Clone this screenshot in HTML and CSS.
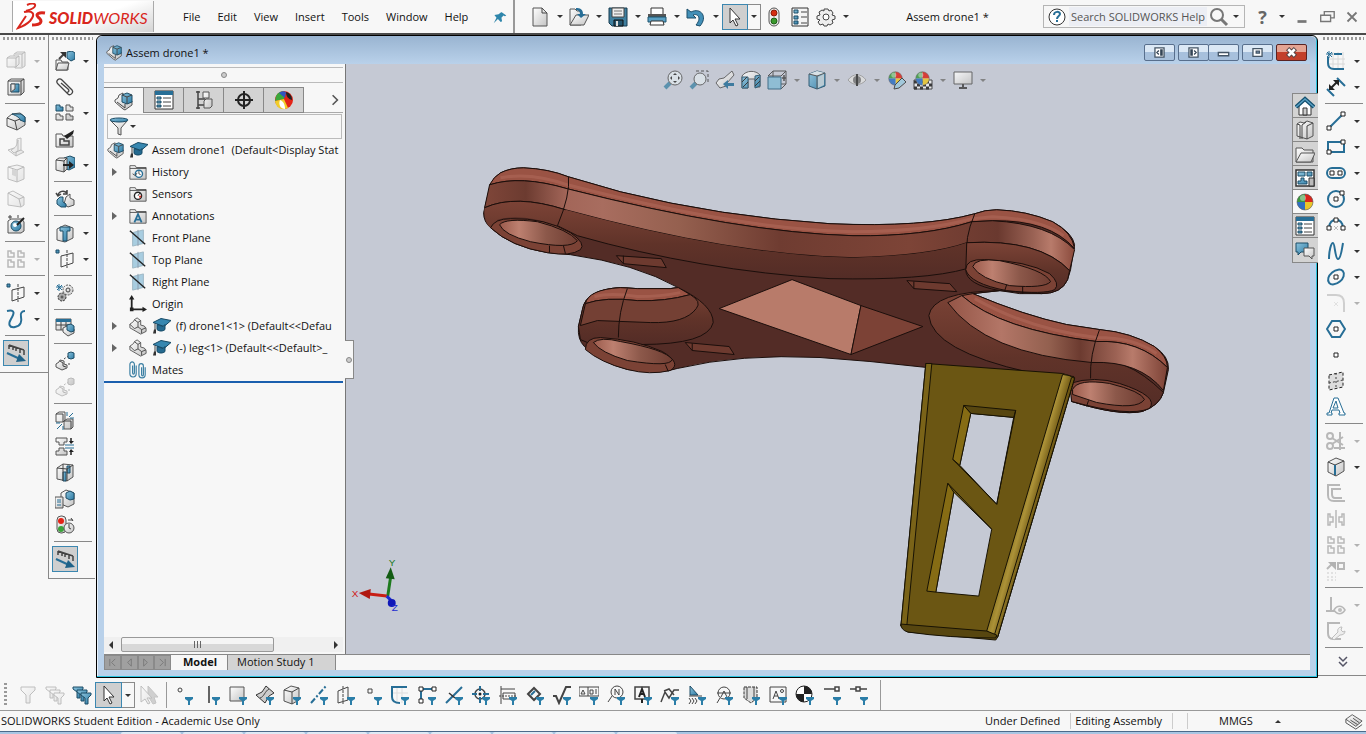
FILE: index.html
```html
<!DOCTYPE html>
<html lang="en">
<head>
  <meta charset="UTF-8" /><meta name="viewport" content="width=device-width,initial-scale=1" />
  <title>SOLIDWORKS - Assem drone1 *</title>
  <link rel="stylesheet" href="styles.css">
</head>
<body>

  <!-- Icon sprite, 20x20 unless noted -->
  <svg class="sprite" aria-hidden="true">
    <defs>
      <linearGradient id="gBlue" x1="0" y1="0" x2="1" y2="1"><stop offset="0" stop-color="#8cc3dc"/><stop offset="1" stop-color="#2c7ba5"/></linearGradient>
      <linearGradient id="gGrey" x1="0" y1="0" x2="1" y2="1"><stop offset="0" stop-color="#fff"/><stop offset="1" stop-color="#c4c4c4"/></linearGradient>
    </defs>

    <symbol id="assembly" viewBox="0 0 20 20"><path class="g" d="M1 9l3-2 1-3 4-2v7l5 3 4-2v4l-7 5-2-1-8-7z"/><path class="b" d="M8 4l5-2 5 2v7l-5 2-5-2z"/><path class="k" d="M8 4l5 2 5-2M13 6v7M3 11l8 6v-4"/></symbol>
    <symbol id="part" viewBox="0 0 20 20"><path class="g" d="M1 8l4-3 1-2 3-2 4 3v5l4 1 2 3v3l-6 3-12-7z"/><path class="k" d="M6 3l4 3v5l-4 2-5-5M10 6l3-2M10 11l4 3 5-2M14 14v4"/></symbol>
    <symbol id="cap" viewBox="0 2 20 17"><path fill="#3787b0" stroke="#174a66" d="M1 7l8-4 10 2-7 6z"/><path fill="#256a90" stroke="#174a66" d="M5 9v5c2 2 6 2 8 0V9l-2 2z"/><path class="k" d="M3 8v7"/><path fill="#333" d="M2 14h2v4H1z"/></symbol>
    <symbol id="extrude" viewBox="0 0 20 20"><path class="g" d="M8 3l3-2h8v14l-3 2H9z"/><path class="g" d="M1 7l3-2h9v8l-3 3H1z"/><path class="k" d="M1 7h9v9M10 7l3-2M9 3h7v13M16 3l3-2"/></symbol>
    <symbol id="cut" viewBox="0 0 20 20"><path class="g" d="M2 4l3-2h13v13l-3 3H2z"/><path class="k" d="M2 4h13v14M15 4l3-2"/><path class="b" d="M5 7h8v8H5z"/><path class="g" d="M5 7h4v5l-4 3z"/></symbol>
    <symbol id="fillet" viewBox="0 0 20 20"><path class="g" d="M1 7l5-4 8-1 5 4v8l-8 5-10-4z"/><path class="b" d="M6 3h9l4 3v5l-5-2c0-2-3-4-8-6z"/><path class="k" d="M1 7l8 3 2 9M9 10l5-2"/></symbol>
    <symbol id="rib" viewBox="0 0 20 20"><path class="g" d="M2 13l9-3V2l4-1v12l3 2-8 4z"/><path class="g" d="M5 13c5-2 6-5 7-10v11l-4 2z"/><path class="k" d="M10 19v-4l5-2"/></symbol>
    <symbol id="shell" viewBox="0 0 20 20"><path class="g" d="M2 4l9-2 7 2v12l-7 3-9-3z"/><path class="k" d="M2 4l9 3 7-3M11 7v12"/><path fill="#999" d="M6 6l5 1v7l-5-2z"/></symbol>
    <symbol id="draft" viewBox="0 0 20 20"><path class="g" d="M2 4l5-2 11 6v8l-3 2-13-2z"/><path class="k" d="M2 4l11 6 5-2M13 10l2 8"/></symbol>
    <symbol id="camera" viewBox="0 0 20 20"><path class="g" d="M2 6l3-2h11l2 3v9l-3 2H2z"/><circle class="b" cx="10" cy="11" r="5"/><circle fill="#fff" cx="9" cy="10" r="2"/><path stroke="#222" stroke-width="2" d="M18 3l-7 7"/><path class="k" d="M4 0v4M2 2h4M12 0v3"/></symbol>
    <symbol id="pattern" viewBox="0 0 20 20"><path class="b" d="M1 2h4v2h3v4H1z"/><path class="g" d="M11 2h4v2h3v4h-7zM1 11h4v2h3v4H1zM11 11h4v2h3v4h-7z"/></symbol>
    <symbol id="refgeo" viewBox="0 0 20 20"><path fill="#4b93b8" stroke="#1f4f6b" d="M1 1h3v3H1z"/><path class="k" d="M6 7l12-3v10L6 18z"/><path class="k" stroke-dasharray="3 1" d="M12 1v18"/></symbol>
    <symbol id="curve" viewBox="0 0 20 20"><path fill="none" stroke="#276e96" stroke-width="2" d="M1 2c9-2 7 3 4 8s-2 9 4 8 7-6 6-10 1-6 4-6"/></symbol>
    <symbol id="instant" viewBox="0 0 20 20"><path class="k" stroke-width="1.5" d="M3 2l15 5M3 2v4M7 3v4M10 4v4M14 6v4M18 7v5"/><path stroke="#276e96" stroke-width="2" d="M1 10l13 6"/><path fill="#1f6288" d="M13 11l7 7-10 1z"/></symbol>

    <symbol id="insertcomp" viewBox="0 0 20 20"><path class="g" d="M1 9h5l1 2h6v8H1z"/><path class="g" d="M3 12h11l-2 7H1z"/><path class="b" d="M12 1l5-1 3 2v6l-4 2-4-3z"/><path class="k" stroke-width="2" d="M4 8l5-5"/><path fill="#333" d="M5 1h6v6z"/></symbol>
    <symbol id="clip" viewBox="0 0 20 20"><path class="k" stroke-width="1.3" d="M3 7l10 10c2 2 6-1 4-4L7 3C4 0 0 4 3 7l8 8c2 1 4-1 2-3L6 6"/></symbol>
    <symbol id="preview" viewBox="0 0 20 20"><path class="g" d="M1 5h6l1 2h10v11H1z"/><path class="k" stroke-width="1.5" d="M5 10h4v2h5v4H5z"/><path fill="#222" d="M9 7l10-6-1 4-6 5z"/></symbol>
    <symbol id="movecomp" viewBox="0 0 20 20"><path class="b" d="M9 3l6-2 5 2v9l-6 3-5-2z"/><path class="g" d="M1 5l3-2h8v11l-3 3-8-2z"/><path class="k" d="M1 5l8 1v11M9 6l3-3"/><path stroke="#222" stroke-width="2" d="M8 10h8"/><path fill="#222" d="M14 6l5 4-5 4z"/></symbol>
    <symbol id="rotate" viewBox="0 0 20 20"><path class="g" d="M11 8l4-3v4l4 2v5l-6 2-4-3z"/><path class="b" d="M2 11l3-3h3v5l3 2v3H6l-4-3z"/><path class="k" stroke-width="1.5" d="M3 6c1-4 6-5 9-2M12 1v4H8M1 4l2 3 3-2"/></symbol>
    <symbol id="hardware" viewBox="0 0 20 20"><path class="g" d="M2 6l8-4 8 3v10l-8 4-8-2z"/><path class="b" d="M5 4h10v4h-3v10H8V8H5z"/></symbol>
    <symbol id="motion" viewBox="0 0 20 20"><circle class="g" cx="13" cy="7" r="5" stroke-dasharray="2 1"/><circle class="k" cx="13" cy="7" r="2"/><circle cx="7" cy="14" r="4" fill="#aaa" stroke="#333" stroke-dasharray="2 1"/><circle class="k" cx="7" cy="14" r="1"/><path stroke="#276e96" d="M4 1v7M1 4h7M2 2l5 5M7 2L2 7"/></symbol>
    <symbol id="bom" viewBox="0 0 20 20"><path class="g" d="M1 2h15v11H1z"/><path fill="#276e96" d="M1 2h15v3H1z"/><path class="k" d="M1 8h15M6 5v8M11 5v8"/><path class="g" d="M8 11l4-2 7 3v4l-6 3-5-4z"/><path class="b" d="M12 8l4-1 3 2v5l-3 1-4-2z"/></symbol>
    <symbol id="explode" viewBox="0 0 20 20"><path class="g" d="M1 13l3-2 1-2 4 1v3l3 1v3l-5 2-6-3z"/><path class="k" d="M5 10l3 2v3l3 1"/><path class="b" d="M13 2l3-1 3 1v5l-3 1-3-1z"/><path class="k" stroke-dasharray="2 2" d="M9 8l4-3M14 14v-4"/></symbol>
    <symbol id="interfere" viewBox="0 0 20 20"><path class="g" d="M1 3l3-2h6v8l-2 2H1zM9 10l3-2h6v8l-2 2H9z"/><path class="k" d="M1 3h7v8M9 10h7v8"/><path stroke="#276e96" d="M12 5V1M14 6l4-4M15 7h4M7 13l-5 5M5 12H1M8 15v4"/></symbol>
    <symbol id="clearance" viewBox="0 0 20 20"><path class="g" d="M1 1h11v4H9v3H4V5H1zM1 18h11v-4H9v-3H4v3H1z"/><path stroke="#276e96" d="M10 8h9M10 11h9"/><path stroke="#222" stroke-width="1.5" d="M16 1v5M16 18v-5"/><path fill="#222" d="M14 4h5l-3 3zM14 15h5l-3-3z"/></symbol>
    <symbol id="align" viewBox="0 0 20 20"><path class="g" d="M2 5l6-4 10 1v12l-6 4-10-2z"/><path class="b" d="M12 3h3v7h-3zM8 9h3v9H8z"/><path class="k" d="M2 5l10 1v12M12 6l6-4M8 1v17"/></symbol>
    <symbol id="visual" viewBox="0 0 20 20"><path class="g" d="M6 4l5-3 8 3v11l-6 3-7-3z"/><path class="b" d="M11 4l4-2 4 2v6l-4 1-4-2z"/><path class="g" d="M0 8h8v11H0z"/><path stroke="#276e96" d="M2 11h4M2 13h4M2 16h4"/></symbol>
    <symbol id="perf" viewBox="0 0 20 20"><rect class="g" x="2" y="1" width="9" height="17" rx="4"/><circle cx="6" cy="6" r="3" fill="#e32417"/><circle cx="6" cy="14" r="3" fill="#3ba33b"/><circle class="g" cx="14" cy="13" r="5"/><path class="k" d="M14 9v4l2 1M13 5h5M16 3l2 3"/></symbol>

    <symbol id="sketch" viewBox="0 0 20 20"><path stroke="#d8d8d8" d="M7 1v18M12 1v18M17 1v18M1 8h18M1 13h18"/><path class="s" stroke-width="2" d="M2 6v6c0 4 2 6 6 6h10M8 3h8"/><path stroke="#276e96" d="M3 0v7M0 3h7M1 1l5 5M6 1L1 6"/></symbol>
    <symbol id="dim" viewBox="0 0 20 20"><path class="s" stroke-width="2" d="M1 12l7 7M11 1l8 8"/><path stroke="#222" stroke-width="2" d="M5 11l6-6"/><path fill="#222" d="M3 7v6h6zM7 3h6v6z"/></symbol>
    <symbol id="line" viewBox="0 0 20 20"><path class="s" stroke-width="2" d="M3 17L17 3"/><path class="d" d="M1 15h4v4H1zM15 1h4v4h-4z"/></symbol>
    <symbol id="rect" viewBox="0 0 20 20"><path class="s" stroke-width="2" d="M2 5h16v10H2z"/><path class="d" d="M1 13h4v4H1zM15 3h4v4h-4z"/></symbol>
    <symbol id="slot" viewBox="0 0 20 20"><rect class="s" stroke-width="2" x="1" y="5" width="18" height="10" rx="5"/><path class="d" d="M4 8h4v4H4zM12 8h4v4h-4z"/></symbol>
    <symbol id="circle" viewBox="0 0 20 20"><circle class="s" stroke-width="2" cx="10" cy="10" r="8"/><path class="d" d="M8 8h4v4H8zM14 2h4v4h-4z"/></symbol>
    <symbol id="arc" viewBox="0 0 20 20"><path class="s" stroke-width="2" d="M3 13c0-11 14-11 14 0"/><path class="d" d="M8 3h4v4H8zM1 11h4v4H1zM15 11h4v4h-4z"/><path stroke="#bbb" d="M8 11l4 4M12 11l-4 4"/></symbol>
    <symbol id="spline" viewBox="0 0 20 20"><path class="s" stroke-width="2" d="M3 18C3 10 5 2 7 2s2 16 5 16S16 7 17 2"/></symbol>
    <symbol id="ellipse" viewBox="0 0 20 20"><ellipse class="s" stroke-width="2" cx="10" cy="10" rx="9" ry="6" transform="rotate(-40 10 10)"/><path class="d" d="M8 8h4v4H8z"/></symbol>
    <symbol id="skfillet" viewBox="0 0 20 20"><path fill="none" stroke="#888" stroke-width="2" d="M1 2h9c6 0 8 3 8 8v9"/><path stroke="#bbb" d="M8 9l4 4M12 9l-4 4"/></symbol>
    <symbol id="polygon" viewBox="0 0 20 20"><path class="s" stroke-width="2" d="M1 10l5-8h8l5 8-5 8H6z"/><path class="d" d="M8 8h4v4H8z"/></symbol>
    <symbol id="point" viewBox="0 0 20 20"><path class="d" d="M8 8h4v4H8z"/></symbol>
    <symbol id="plane" viewBox="0 0 20 20"><path fill="#ddd" stroke="#222" stroke-dasharray="3 2" d="M3 4l14-3v15L3 19z"/><path class="k" stroke-dasharray="2 2" d="M10 2v16M3 12l14-3"/></symbol>
    <symbol id="text" viewBox="0 0 20 20"><path fill="#fff" stroke="#276e96" d="M1 18h5v-2H5l1-3h7l1 3h-1v2h6v-2h-1L12 1H8L3 16H1zM7 11l3-7 2 7z"/></symbol>
    <symbol id="trim" viewBox="0 0 20 20"><circle class="k" stroke-width="2" cx="4" cy="5" r="3"/><circle class="k" stroke-width="2" cx="4" cy="15" r="3"/><path class="k" stroke-width="2" d="M6 7l11 7M6 13l11-7M8 17h11M14 1v18"/></symbol>
    <symbol id="convert" viewBox="0 0 20 20"><path class="g" d="M2 5l8-4 8 3v10l-8 5-8-4z"/><path class="k" d="M2 5l7 3 9-4M9 8v11"/><path stroke="#276e96" stroke-width="2" d="M9 8v10"/></symbol>
    <symbol id="offset" viewBox="0 0 20 20"><path class="k" stroke-width="2" d="M14 2H2v10c0 5 2 6 6 6h11M15 6H6v5c0 3 1 4 3 4h7"/></symbol>
    <symbol id="mirror" viewBox="0 0 20 20"><path class="k" stroke-width="1.5" d="M10 1v18M2 5h2v3h3v5H4v3H2zM18 5h-2v3h-3v5h3v3h2z"/></symbol>
    <symbol id="lpattern" viewBox="0 0 20 20"><path class="k" stroke-width="1.5" d="M2 2h3v2h3v4H2zM12 2h3v2h3v4h-6zM2 11h3v2h3v5H2zM12 11h3v2h3v5h-6z"/></symbol>
    <symbol id="moveent" viewBox="0 0 20 20"><path class="k" stroke-width="2" d="M1 8l5-5M12 2h6v6h-6z"/><path fill="#333" d="M2 1h8v8z"/><path stroke="#bbb" stroke-width="2" stroke-dasharray="2 2" d="M1 12h9M1 16h9M1 19h9"/></symbol>
    <symbol id="relations" viewBox="0 0 20 20"><path class="k" stroke-width="2" d="M5 2v14M0 16h9"/><path class="k" stroke-width="1.5" d="M8 15c3-5 8-5 11 0-3 5-8 5-11 0z"/><circle cx="14" cy="15" r="2" fill="#555"/></symbol>
    <symbol id="repair" viewBox="0 0 20 20"><path class="k" stroke-width="2" d="M14 2H2v10c0 5 2 6 5 6h8"/><path class="g" d="M6 17l6-6c-1-3 1-5 4-5l-1 3 2 2 2-1c0 3-2 4-5 4l-6 5z"/></symbol>
    <symbol id="more" viewBox="0 0 20 20"><path fill="none" stroke="#556" stroke-width="1.5" d="M6 6l4 4 4-4M6 11l4 4 4-4"/></symbol>

    <symbol id="new" viewBox="0 0 20 20"><path class="g" d="M3 1h9l5 5v13H3z"/><path class="k" d="M12 1v5h5"/></symbol>
    <symbol id="open" viewBox="0 0 20 20"><path class="g" d="M1 2h5l2 2h4v14H1z"/><path class="g" d="M7 8h13l-5 10H1z"/><path fill="#276e96" d="M7 1c4 0 7 1 7 6h3l-5 4-4-4h3c0-3-2-4-4-4z"/></symbol>
    <symbol id="save" viewBox="0 0 20 20"><path fill="#3e7f9f" stroke="#183c50" d="M1 1h18v18H4l-3-3z"/><path fill="#eee" stroke="#444" d="M4 1h12v9H4z"/><path stroke="#777" d="M6 4h8M6 7h8"/><path fill="#24566f" stroke="#111" d="M6 13h9v6H6z"/><path fill="#ddd" d="M8 14h2v5H8z"/></symbol>
    <symbol id="print" viewBox="0 0 20 20"><path fill="#fff" stroke="#333" d="M4 7V1h12v6"/><path fill="#555" d="M1 7h18v4H1z"/><path fill="#5aa0c4" stroke="#1d546f" d="M1 10h18v5H1z"/><path fill="#fff" stroke="#333" d="M4 14h12l1 4H3z"/></symbol>
    <symbol id="undo" viewBox="0 0 20 20"><path fill="#4390b8" stroke="#1a4c69" d="M1 2v9h9L7 8c5-2 9 3 3 10l4 1C22 10 15 0 5 5z"/></symbol>
    <symbol id="cursor" viewBox="0 0 20 20"><path fill="#fff" stroke="#333" d="M5 1l10 11H10l3 6-2 1-3-6-3 3z"/></symbol>
    <symbol id="light" viewBox="0 0 20 20"><rect fill="#eee" stroke="#555" x="5" y="1" width="10" height="18" rx="5"/><circle cx="10" cy="6" r="3" fill="#d62d10" stroke="#8a1c08"/><circle cx="10" cy="14" r="3" fill="#3a9a2d" stroke="#1e5c17"/></symbol>
    <symbol id="props" viewBox="0 0 20 20"><path fill="#f4f4f4" stroke="#333" d="M2 1h16v18H2z"/><path class="b" d="M4 3h4v3H4zM4 9h4v3H4zM4 14h4v3H4z"/><path class="k" d="M11 5h6M11 10h6M11 16h6"/></symbol>
    <symbol id="gear" viewBox="0 0 20 20"><path fill="#eee" stroke="#444" d="M8 2h4l1 2 2-1 2 3-1 2 3 1v3l-3 1 1 3-3 2-2-1-1 2H8l-1-2-3 1-2-3 2-2-3-1V9l3-1-1-3 3-2 2 1z"/><circle fill="#fff" stroke="#444" cx="10" cy="10" r="3"/></symbol>
    <symbol id="pin" viewBox="0 0 20 20"><path fill="#2e86ab" d="M11 2l8 6-2 1-2-1-3 3 1 5-2 1-4-4-6 6 4-8-3-4 6-1 4-3z"/></symbol>

    <symbol id="zoomfit" viewBox="0 0 20 20"><path stroke="#4a89a8" stroke-width="4" d="M2 18l5-5"/><circle class="lens" cx="12" cy="8" r="7"/><path fill="#333" d="M12 3l2 2h-4zM12 13l2-2h-4zM7 8l2-2v4zM17 8l-2-2v4z"/></symbol>
    <symbol id="zoomarea" viewBox="0 0 20 20"><path stroke="#4a89a8" stroke-width="4" d="M2 18l5-5"/><path class="k" stroke-dasharray="3 2" d="M7 1h12v13"/><circle class="lens" cx="11" cy="9" r="6"/></symbol>
    <symbol id="prevview" viewBox="0 0 20 20"><path class="g" d="M1 13l3-4 5-1 8-7 2 4-7 8-1 3-6 2z"/><path fill="#276e96" d="M8 14l5-4v3h6v3h-6v3z"/></symbol>
    <symbol id="section" viewBox="0 0 20 20"><path class="g" d="M1 6c4-6 14-6 18-1v12h-5V9H7v9H1z"/><path class="b" d="M1 7h6v11H1zM14 6l5-1v11l-5 2z"/><path stroke="#222" d="M1 12l5-5M2 17l5-5M14 11l4-4M14 16l5-5"/></symbol>
    <symbol id="orient" viewBox="0 0 20 20"><path class="k" d="M1 6l5-5h13v13l-5 5M6 1v13h13M1 6h13l5-5"/><path fill="#86bcd4" stroke="#2a5f7c" d="M1 7h13v12H1z"/><path class="k" stroke-width="1.5" d="M15 8h4M17 5v6"/></symbol>
    <symbol id="display" viewBox="0 0 20 20"><path class="b" d="M2 4l8-3 8 2v13l-8 3-8-3z"/><path fill="#dce6ea" d="M2 4l8-3 8 2-8 3z"/><path class="k" d="M2 4l8 2 8-3M10 6v13"/><path fill="#b8cbd3" d="M11 7l6-3v11l-6 3z"/></symbol>
    <symbol id="eye" viewBox="0 0 20 20"><path fill="#ddd" stroke="#999" d="M1 10c5-7 13-7 18 0-5 6-13 6-18 0z"/><circle cx="10" cy="10" r="4" fill="#777"/><path fill="#333" d="M9 4h2v12H9z"/></symbol>
    <symbol id="ball" viewBox="0 0 20 20"><path fill="#3a9a3d" d="M10 10H2a8 8 0 0 1 8-8z"/><path fill="#d9261c" d="M10 10V2a8 8 0 0 1 8 8z"/><path fill="#e9c52a" d="M18 10a8 8 0 0 1-8 8v-8z"/><path fill="#2f6fc1" d="M10 18a8 8 0 0 1-8-8h8z"/><circle cx="8" cy="6" r="3" fill="#fff" opacity=".4"/><circle fill="none" stroke="#555" cx="10" cy="10" r="8" opacity=".6"/></symbol>
    <symbol id="dispmgr" viewBox="0 0 20 20"><circle cx="10" cy="10" r="9" fill="#e32417"/><path fill="#3aa83a" d="M2 6c3-5 6-5 8-4v7l-9 2z"/><path fill="#2f55c1" d="M5 3c3-2 5-2 7-1l-1 6z"/><path fill="#f1cd2b" d="M1 11l9-2 4 9c-6 3-12 0-13-7z"/><path fill="#fff" d="M6 10c3 1 5 4 5 9-4 0-7-4-5-9z"/><path fill="#222" d="M12 2c4 1 6 4 6 8-4-1-6-4-6-8z"/></symbol>
    <symbol id="editapp" viewBox="0 0 20 20"><use href="#ball" width="17" height="17"/><path fill="#9cc8dd" stroke="#333" d="M8 15l7-7 4 4-7 6-5 1z"/></symbol>
    <symbol id="scene" viewBox="0 0 20 20"><path fill="#eee" stroke="#333" d="M1 10h18v9H1z"/><path stroke="#222" stroke-width="3" stroke-dasharray="3 3" d="M1 12h18M4 15h16M1 18h18"/><use href="#ball" x="1" width="17" height="17"/></symbol>
    <symbol id="monitor" viewBox="0 0 20 20"><path class="g" d="M1 2h18v12H1z"/><path stroke="#444" stroke-width="2" d="M10 14v4M6 18h8"/></symbol>

    <symbol id="confmgr" viewBox="0 0 20 20"><path class="k" stroke-width="1.5" d="M4 1v18M2 2h4M2 18h4M4 9h7M4 15h7"/><path class="g" d="M9 2h6v6H9zM10 11l2-2h6v7l-2 2h-6z"/></symbol>
    <symbol id="dimx" viewBox="0 0 20 20"><circle cx="10" cy="10" r="6" fill="none" stroke="#222" stroke-width="2"/><path stroke="#222" stroke-width="2" d="M10 1v18M1 10h18"/></symbol>
    <symbol id="listmgr" viewBox="0 0 20 20"><path fill="#fff" stroke="#333" d="M1 1h18v18H1z"/><path fill="#276e96" d="M1 1h18v4H1z"/><path class="b" d="M3 7h4v2H3zM3 11h4v2H3zM3 15h4v2H3z"/><path class="k" d="M9 8h8M9 12h8M9 16h8"/></symbol>
    <symbol id="funnel" viewBox="0 0 20 20"><path class="g" d="M2 4h16l-6 7v7l-3-1v-6z"/><ellipse class="b" cx="10" cy="3" rx="9" ry="2"/></symbol>
    <symbol id="fhist" viewBox="0 0 20 20"><path class="g" d="M1 3h6l1 2h11v13H1z"/><path class="k" d="M1 6h18"/><circle fill="#fff" stroke="#276e96" stroke-width="1.5" cx="11" cy="12" r="4"/><path class="k" d="M11 9v3l2 1M4 12l3 2 2-3"/></symbol>
    <symbol id="fsens" viewBox="0 0 20 20"><path class="g" d="M1 3h6l1 2h11v13H1z"/><path class="k" d="M1 6h18"/><circle fill="#fff" stroke="#222" stroke-width="1.5" cx="10" cy="12" r="4"/><path stroke="#222" d="M10 12l2-3"/><path fill="#e32417" d="M11 12h3l-2 3z"/></symbol>
    <symbol id="fanno" viewBox="0 0 20 20"><path class="g" d="M1 3h6l1 2h11v13H1z"/><path class="k" d="M1 6h18"/><path fill="none" stroke="#276e96" stroke-width="2" d="M6 17l4-9 4 9M8 14h5"/></symbol>
    <symbol id="tplane" viewBox="0 0 20 20"><path fill="#a8cde0" stroke="#9ab4c2" d="M4 4l12-3v15L4 19z"/><path stroke="#89a" d="M10 1v18"/><path stroke="#222" stroke-width="1.5" d="M1 2l17 15"/></symbol>
    <symbol id="origin" viewBox="0 0 20 20"><path fill="none" stroke="#222" stroke-width="2" d="M3 3v13h14"/><path fill="#222" d="M0 5l3-5 3 5zM15 13l5 3-5 3zM1 14h4v4H1z"/></symbol>
    <symbol id="mates" viewBox="0 0 20 20"><path fill="none" stroke="#3b7fa3" stroke-width="1.3" d="M4 5v8c0 2 2 2 2 0V4c0-4-5-4-5 0v10c0 5 7 5 7 0V5M14 7v8c0 2 2 2 2 0V6c0-4-5-4-5 0v9c0 5 7 5 7 0V7"/></symbol>

    <symbol id="home" viewBox="0 0 20 20"><path fill="#fff" stroke="#333" d="M4 9v10h12V9l-6-6z"/><path fill="#ccc" stroke="#333" d="M8 12h4v7H8z"/><path fill="none" stroke="#14506f" stroke-width="4" d="M1 11l9-8 9 8"/><path fill="none" stroke="#5aa0c4" stroke-width="1.5" d="M1 11l9-8 9 8"/></symbol>
    <symbol id="books" viewBox="0 0 20 20"><path class="g" d="M2 4l3-2 4 1 3-2 6 2v13l-6 3-10-3z"/><path class="k" d="M2 4l3 1v14M7 5v14M12 6v13M7 5l4-3M12 6l6-3"/></symbol>
    <symbol id="folder" viewBox="0 0 20 20"><path class="g" d="M1 4h6l2 2h9v12H1z"/><path class="g" d="M6 9h14l-4 9H1z"/></symbol>
    <symbol id="palette" viewBox="0 0 20 20"><path fill="#fff" stroke="#333" stroke-width="1.5" d="M1 2h18v16H1z"/><path class="b" d="M3 4h7v4H3zM12 4h5v4h-5zM6 10h3v3h3v3H3v-3h3z"/><path fill="#bbb" stroke="#333" d="M14 10h5v8h-5z"/></symbol>
    <symbol id="forum" viewBox="0 0 20 20"><path class="b" d="M1 3h12v9H6l-3 3v-3H1z"/><path class="g" d="M9 8h10v8h-2v3l-3-3H9z"/></symbol>

    <!-- filter toolbar -->
    <symbol id="fn" viewBox="0 0 20 20"><path fill="#2b7ea8" d="M11 12h8v2l-3 2v4h-2v-4l-3-2z"/></symbol>
    <symbol id="funnel1" viewBox="0 0 20 20"><path class="g" d="M3 2h14v3l-5 5v8H8v-8L3 5z"/></symbol>
    <symbol id="funnels" viewBox="0 0 20 20"><path class="g" d="M1 2h10v2L8 7v6H5V7L1 4z"/><path class="g" d="M5 5h10v2l-3 3v6H9v-6L5 7z"/><path class="g" d="M9 8h10v2l-3 3v6h-3v-6L9 10z"/></symbol>
    <symbol id="funnelsb" viewBox="0 0 20 20"><path class="b" d="M1 2h10v2L8 7v6H5V7L1 4z"/><path class="b" d="M5 5h10v2l-3 3v6H9v-6L5 7z"/><path class="b" d="M9 8h10v2l-3 3v6h-3v-6L9 10z"/></symbol>
    <symbol id="cursors" viewBox="0 0 20 20"><path fill="#888" stroke="#666" d="M9 1l10 11h-4l2 6-3 1-5-8z"/><path class="g" d="M2 1l11 12H8l3 5-2 1-3-5-4 3z"/></symbol>
    <symbol id="f1" viewBox="0 0 20 20"><circle class="k" cx="6" cy="5" r="2"/></symbol>
    <symbol id="f2" viewBox="0 0 20 20"><path stroke="#333" stroke-width="1.5" d="M8 1v17"/></symbol>
    <symbol id="f3" viewBox="0 0 20 20"><path class="g" d="M2 2h14v14H2z"/></symbol>
    <symbol id="f4" viewBox="0 0 20 20"><path fill="#ccc" stroke="#333" d="M1 10l6-3 4-6 8 7-5 3-4 7z"/><path class="k" d="M5 13c4-1 5-7 9-9"/></symbol>
    <symbol id="f5" viewBox="0 0 20 20"><path class="g" d="M2 5l7-4 8 2v12l-7 4-8-3z"/><path class="k" d="M2 5l8 2 7-4M10 7v12"/></symbol>
    <symbol id="f6" viewBox="0 0 20 20"><path stroke="#276e96" stroke-width="2" stroke-dasharray="6 2 2 2" d="M2 18L17 1"/></symbol>
    <symbol id="f7" viewBox="0 0 20 20"><path class="k" d="M2 6l10-4v13L2 18z"/><path class="k" stroke-dasharray="3 1" d="M7 1v18"/></symbol>
    <symbol id="f8" viewBox="0 0 20 20"><path class="k" d="M5 4h4v4H5z"/></symbol>
    <symbol id="f9" viewBox="0 0 20 20"><path stroke="#ddd" d="M7 2v16M12 2v16M2 8h16"/><path class="s" stroke-width="2" d="M17 2H2v10c0 4 2 6 8 6"/></symbol>
    <symbol id="f10" viewBox="0 0 20 20"><path class="s" stroke-width="2" d="M4 18V4h12"/><path class="d" d="M2 2h4v4H2zM15 2h4v4h-4zM2 14h4v4H2z"/></symbol>
    <symbol id="f11" viewBox="0 0 20 20"><path class="s" stroke-width="2" d="M2 18L18 2"/><path stroke="#333" stroke-width="1.5" d="M5 8l6 5"/></symbol>
    <symbol id="f12" viewBox="0 0 20 20"><circle class="k" stroke-width="1.5" cx="9" cy="9" r="5"/><path stroke="#276e96" stroke-width="2" d="M9 1v5M9 12v6M1 9h5M12 9h6"/><circle cx="9" cy="9" r="1.5" fill="#222"/></symbol>
    <symbol id="f13" viewBox="0 0 20 20"><path class="k" d="M3 1v18M3 4h14M5 8h12v6H5z"/><path class="k" stroke-dasharray="2 1" d="M1 11h18"/></symbol>
    <symbol id="f14" viewBox="0 0 20 20"><path class="k" stroke-width="2" d="M3 9l6-6 6 6-6 6z"/><path class="s" stroke-width="2" d="M6 10l4-4"/></symbol>
    <symbol id="f15" viewBox="0 0 20 20"><path class="k" stroke-width="2" d="M1 11h3l3 7L14 2h5"/></symbol>
    <symbol id="f16" viewBox="0 0 20 20"><path class="k" d="M0 2h20v9H0zM9 2v9M2 9l2-4 2 4zM11 5h3v4h-3zM17 4v5"/></symbol>
    <symbol id="f17" viewBox="0 0 20 20"><circle class="k" cx="11" cy="7" r="6"/><path class="k" d="M6 11l-4 6M9 10V4l4 6V4"/></symbol>
    <symbol id="f18" viewBox="0 0 20 20"><path class="k" stroke-width="1.5" d="M2 2h14v12H2z"/><path stroke="#222" stroke-width="2" fill="none" d="M6 12l3-8 3 8M7 9h4M9 14v4"/></symbol>
    <symbol id="f19" viewBox="0 0 20 20"><path class="k" stroke-width="1.5" d="M1 17l4-10 4 6 5-8h5M4 6l5-2 5 6"/></symbol>
    <symbol id="f20" viewBox="0 0 20 20"><path class="b" d="M3 1v9h8z"/><path class="k" d="M2 11h13M2 13l2 3-2 3M5 13l2 3-2 3M8 13l2 3-2 3"/></symbol>
    <symbol id="f21" viewBox="0 0 20 20"><circle class="k" cx="10" cy="8" r="6"/><path class="k" d="M7 12l3-6 3 6M3 8h14M6 13l-3 5"/></symbol>
    <symbol id="f22" viewBox="0 0 20 20"><path fill="#ddd" stroke="#333" stroke-dasharray="3 1" d="M3 2h13v11l-6 5-7-5z"/><path class="k" d="M6 2v12M13 2v12"/></symbol>
    <symbol id="f23" viewBox="0 0 20 20"><path class="k" d="M2 2h16v15H2z"/><path class="k" d="M5 14l3-8 3 8M6 11h4"/><circle class="k" cx="14" cy="6" r="1.5"/></symbol>
    <symbol id="f24" viewBox="0 0 20 20"><circle fill="#fff" stroke="#222" cx="9" cy="9" r="8"/><path fill="#222" d="M9 9V1a8 8 0 0 1 8 8zM9 9v8a8 8 0 0 1-8-8z"/></symbol>
    <symbol id="f25" viewBox="0 0 20 20"><path class="k" stroke-width="1.5" d="M2 4h11M13 2h4v4h-4z"/></symbol>
    <symbol id="f26" viewBox="0 0 20 20"><path class="k" stroke-width="1.5" d="M1 4h6M7 2h4v4H7zM11 4h7"/></symbol>
    <symbol id="tag" viewBox="0 0 20 20"><path class="g" d="M1 8l7-5 11 7-7 6z"/><path class="k" d="M1 8v4l11 7 7-5M6 9l8 5M9 7l7 5"/></symbol>
  </svg>

  <!-- Menu bar -->
  <header class="menubar">
    <div class="logo">
      <svg viewBox="0 0 30 28" aria-hidden="true"><g fill="none" stroke="#d9261c" stroke-width="2"><path d="M11 2C15 0 20 0 19 3 18 6 13 7 10 8"/><path d="M8 9C17 7 20 11 14 18 10 22 5 24 2 25L10 13"/><path stroke-width="3" d="M29 10C23 9 19 11 22 14 27 18 26 22 16 22"/></g></svg>
      <span><b>SOLID</b>WORKS</span>
    </div>
    <nav class="menus">
      <button>File</button><button>Edit</button><button>View</button><button>Insert</button><button>Tools</button><button>Window</button><button>Help</button>
      <button class="pin" aria-label="Pin menu"><svg><use href="#pin"/></svg></button>
    </nav>
    <div class="std">
      <button class="tool" aria-label="New"><svg><use href="#new"/></svg></button><button class="drop" aria-label="New options"></button>
      <button class="tool" aria-label="Open"><svg><use href="#open"/></svg></button><button class="drop" aria-label="Open options"></button>
      <button class="tool" aria-label="Save"><svg><use href="#save"/></svg></button><button class="drop" aria-label="Save options"></button>
      <button class="tool" aria-label="Print"><svg><use href="#print"/></svg></button><button class="drop" aria-label="Print options"></button>
      <button class="tool" aria-label="Undo"><svg><use href="#undo"/></svg></button><button class="drop" aria-label="Undo options"></button>
      <button class="tool on" aria-label="Select"><svg><use href="#cursor"/></svg></button><button class="drop boxed" aria-label="Select options"></button>
      <button class="tool" aria-label="Rebuild"><svg><use href="#light"/></svg></button>
      <button class="tool" aria-label="File Properties"><svg><use href="#props"/></svg></button>
      <button class="tool" aria-label="Options"><svg><use href="#gear"/></svg></button><button class="drop" aria-label="More options"></button>
    </div>
    <span class="doc-name">Assem drone1 *</span>
    <div class="search">
      <svg viewBox="0 0 20 20" aria-hidden="true"><circle cx="10" cy="10" r="8" fill="#fff" stroke="#333"/><path fill="none" stroke="#276e96" stroke-width="2" d="M7 8c0-4 6-4 6-1 0 2-3 2-3 5M10 13v2"/></svg>
      <input type="text" placeholder="Search SOLIDWORKS Help" aria-label="Search SOLIDWORKS Help">
      <button aria-label="Search"><svg viewBox="0 0 20 20"><circle cx="8" cy="8" r="6" fill="none" stroke="#777" stroke-width="2"/><path stroke="#777" stroke-width="3" d="M12 12l6 6"/></svg></button>
      <button class="drop" aria-label="Search options"></button>
    </div>
    <div class="app-btns">
      <button class="help" aria-label="Help">?</button><button class="drop" aria-label="Help options"></button>
      <button aria-label="Minimize"><svg viewBox="0 0 20 20"><path stroke="#777" stroke-width="3" d="M5 15h10"/></svg></button>
      <button aria-label="Restore"><svg viewBox="0 0 20 20"><path fill="none" stroke="#777" stroke-width="1.5" d="M7 8V4h11v7h-4M3 8h11v7H3z"/></svg></button>
      <button aria-label="Close"><svg viewBox="0 0 20 20"><path stroke="#777" stroke-width="2" d="M5 5l10 10M15 5L5 15"/></svg></button>
    </div>
  </header>

  <main class="workspace">
    <!-- Features toolbar -->
    <div class="bar features">
      <div class="grip"></div>
      <div class="row off"><button class="tool" aria-label="Extruded Boss"><svg><use href="#extrude"/></svg></button><button class="drop" aria-label="Boss options"></button></div>
      <div class="row"><button class="tool" aria-label="Extruded Cut"><svg><use href="#cut"/></svg></button><button class="drop" aria-label="Cut options"></button></div>
      <hr>
      <div class="row"><button class="tool" aria-label="Fillet"><svg><use href="#fillet"/></svg></button><button class="drop" aria-label="Fillet options"></button></div>
      <div class="row off"><button class="tool" aria-label="Rib"><svg><use href="#rib"/></svg></button></div>
      <div class="row off"><button class="tool" aria-label="Shell"><svg><use href="#shell"/></svg></button></div>
      <div class="row off"><button class="tool" aria-label="Draft"><svg><use href="#draft"/></svg></button></div>
      <div class="row"><button class="tool" aria-label="Hole Wizard"><svg><use href="#camera"/></svg></button><button class="drop" aria-label="Hole options"></button></div>
      <hr>
      <div class="row off"><button class="tool" aria-label="Linear Pattern"><svg><use href="#lpattern"/></svg></button><button class="drop" aria-label="Pattern options"></button></div>
      <hr>
      <div class="row"><button class="tool" aria-label="Reference Geometry"><svg><use href="#refgeo"/></svg></button><button class="drop" aria-label="Geometry options"></button></div>
      <div class="row"><button class="tool" aria-label="Curves"><svg><use href="#curve"/></svg></button><button class="drop" aria-label="Curve options"></button></div>
      <hr>
      <div class="row"><button class="tool on" aria-label="Instant3D"><svg><use href="#instant"/></svg></button></div>
    </div>

    <!-- Assembly toolbar -->
    <div class="bar assembly">
      <div class="grip"></div>
      <div class="row"><button class="tool" aria-label="Insert Components"><svg><use href="#insertcomp"/></svg></button><button class="drop" aria-label="Insert options"></button></div>
      <div class="row"><button class="tool" aria-label="Mate"><svg><use href="#clip"/></svg></button></div>
      <div class="row"><button class="tool" aria-label="Component Pattern"><svg><use href="#pattern"/></svg></button><button class="drop" aria-label="Pattern options"></button></div>
      <div class="row"><button class="tool" aria-label="Component Preview"><svg><use href="#preview"/></svg></button></div>
      <div class="row"><button class="tool" aria-label="Move Component"><svg><use href="#movecomp"/></svg></button><button class="drop" aria-label="Move options"></button></div>
      <hr>
      <div class="row"><button class="tool" aria-label="Show Hidden"><svg><use href="#rotate"/></svg></button></div>
      <hr>
      <div class="row"><button class="tool" aria-label="Assembly Features"><svg><use href="#hardware"/></svg></button><button class="drop" aria-label="Feature options"></button></div>
      <div class="row"><button class="tool" aria-label="Reference Geometry"><svg><use href="#refgeo"/></svg></button><button class="drop" aria-label="Geometry options"></button></div>
      <hr>
      <div class="row"><button class="tool" aria-label="New Motion Study"><svg><use href="#motion"/></svg></button></div>
      <hr>
      <div class="row"><button class="tool" aria-label="Bill of Materials"><svg><use href="#bom"/></svg></button></div>
      <hr>
      <div class="row"><button class="tool" aria-label="Exploded View"><svg><use href="#explode"/></svg></button></div>
      <div class="row off"><button class="tool" aria-label="Explode Line Sketch"><svg><use href="#explode"/></svg></button></div>
      <hr>
      <div class="row"><button class="tool" aria-label="Interference Detection"><svg><use href="#interfere"/></svg></button></div>
      <div class="row"><button class="tool" aria-label="Clearance Verification"><svg><use href="#clearance"/></svg></button></div>
      <div class="row"><button class="tool" aria-label="Hole Alignment"><svg><use href="#align"/></svg></button></div>
      <div class="row"><button class="tool" aria-label="Assembly Visualization"><svg><use href="#visual"/></svg></button></div>
      <div class="row"><button class="tool" aria-label="Performance Evaluation"><svg><use href="#perf"/></svg></button></div>
      <hr>
      <div class="row"><button class="tool on" aria-label="Instant3D"><svg><use href="#instant"/></svg></button></div>
    </div>

    <!-- Document window -->
    <section class="window">
      <div class="titlebar">
        <svg><use href="#assembly"/></svg>
        <h1>Assem drone1 *</h1>
        <div class="win-btns">
          <button aria-label="Dock left"><svg viewBox="0 0 20 20"><path fill="#fff" stroke="#456" stroke-width="2" d="M3 3h14v14H3z"/><path fill="none" stroke="#345" stroke-width="2" d="M9 7l-3 3 3 3M12 6h2v8h-2z"/></svg></button>
          <button class="joined" aria-label="Dock right"><svg viewBox="0 0 20 20"><path fill="#fff" stroke="#456" stroke-width="2" d="M3 3h14v14H3z"/><path fill="none" stroke="#345" stroke-width="2" d="M11 7l3 3-3 3M6 6h2v8H6z"/></svg></button>
          <button aria-label="Minimize document"><svg viewBox="0 0 20 20"><path fill="#fff" stroke="#456" stroke-width="2" d="M2 10h16v5H2z"/></svg></button>
          <button aria-label="Maximize document"><svg viewBox="0 0 20 20"><path fill="#fff" stroke="#456" stroke-width="2" d="M3 4h14v12H3z"/><path fill="#7d9fc4" stroke="#456" stroke-width="2" d="M8 8h5v3H8z"/></svg></button>
          <button class="close" aria-label="Close document"><svg viewBox="0 0 20 20"><path stroke="#544" stroke-width="7" d="M4 4l12 12M16 4L4 16"/><path stroke="#fff" stroke-width="4" d="M5 5l10 10M15 5L5 15"/></svg></button>
        </div>
      </div>

      <div class="client">
        <aside class="manager">
          <div class="flyout"><i></i></div>
          <div class="mgr-tabs">
            <button class="active" aria-label="FeatureManager"><svg><use href="#assembly"/></svg></button>
            <button aria-label="PropertyManager"><svg><use href="#listmgr"/></svg></button>
            <button aria-label="ConfigurationManager"><svg><use href="#confmgr"/></svg></button>
            <button aria-label="DimXpertManager"><svg><use href="#dimx"/></svg></button>
            <button aria-label="DisplayManager"><svg><use href="#dispmgr"/></svg></button>
            <button class="next" aria-label="More tabs"><svg viewBox="0 0 20 20"><path fill="none" stroke="#555" stroke-width="2" d="M7 4l6 6-6 6"/></svg></button>
          </div>
          <div class="tree-filter"><svg><use href="#funnel"/></svg><button class="drop" aria-label="Filter options"></button></div>
          <ul class="tree">
            <li class="root"><svg><use href="#assembly"/></svg><svg class="edu"><use href="#cap"/></svg>Assem drone1&nbsp; (Default&lt;Display Stat</li>
            <li class="exp"><svg><use href="#fhist"/></svg>History</li>
            <li><svg><use href="#fsens"/></svg>Sensors</li>
            <li class="exp"><svg><use href="#fanno"/></svg>Annotations</li>
            <li><svg><use href="#tplane"/></svg>Front Plane</li>
            <li><svg><use href="#tplane"/></svg>Top Plane</li>
            <li><svg><use href="#tplane"/></svg>Right Plane</li>
            <li><svg><use href="#origin"/></svg>Origin</li>
            <li class="exp"><svg><use href="#part"/></svg><svg class="edu"><use href="#cap"/></svg>(f) drone1&lt;1&gt; (Default&lt;&lt;Defau</li>
            <li class="exp"><svg><use href="#part"/></svg><svg class="edu"><use href="#cap"/></svg>(-) leg&lt;1&gt; (Default&lt;&lt;Default&gt;_</li>
            <li><svg><use href="#mates"/></svg>Mates</li>
          </ul>
          <div class="hscroll"><button aria-label="Scroll left"></button><div class="track"><div class="thumb"></div></div><button class="right" aria-label="Scroll right"></button></div>
        </aside>

        <div class="viewport">
          <svg class="model" viewBox="346 64 964 591" role="img" aria-label="Drone assembly">
            <defs>
              <linearGradient id="armMid" gradientUnits="userSpaceOnUse" x1="484" y1="0" x2="1075" y2="0">
                <stop offset="0" stop-color="#7f4639"/><stop offset=".07" stop-color="#6c3b30"/><stop offset=".14" stop-color="#a36659"/><stop offset=".2" stop-color="#a86d5f"/><stop offset=".33" stop-color="#95604f"/><stop offset=".5" stop-color="#6f3c31"/><stop offset=".72" stop-color="#7d4437"/><stop offset=".87" stop-color="#6a392f"/><stop offset=".93" stop-color="#9a6254"/><stop offset=".96" stop-color="#b87b6b"/><stop offset="1" stop-color="#8a4a3c"/>
              </linearGradient>
              <linearGradient id="armLow" gradientUnits="userSpaceOnUse" x1="930" y1="0" x2="1169" y2="0">
                <stop offset="0" stop-color="#8a4a3c"/><stop offset=".3" stop-color="#b37667"/><stop offset=".5" stop-color="#93604f"/><stop offset=".63" stop-color="#6c3b30"/><stop offset=".78" stop-color="#9c6254"/><stop offset=".85" stop-color="#b87b6b"/><stop offset="1" stop-color="#7a4034"/>
              </linearGradient>
              <linearGradient id="hole" x1="0" y1="0" x2="1" y2="0"><stop offset="0" stop-color="#9b5b4c"/><stop offset=".25" stop-color="#bd8070"/><stop offset=".6" stop-color="#8c584a"/><stop offset="1" stop-color="#6f3d32"/></linearGradient>
              <linearGradient id="under" x1="0" y1="0" x2="0" y2="1"><stop offset="0" stop-color="#7c4336"/><stop offset=".55" stop-color="#603329"/><stop offset="1" stop-color="#532c26"/></linearGradient>
              <linearGradient id="gold" gradientUnits="userSpaceOnUse" x1="1020" y1="500" x2="1038" y2="505"><stop offset="0" stop-color="#86701d"/><stop offset=".45" stop-color="#ac9238"/><stop offset="1" stop-color="#6c5512"/></linearGradient>
            </defs>
            <g stroke="#1b0e0b" stroke-width="1" stroke-linejoin="round">
              <!-- body -->
              <path fill="#532c26" d="M483 213L487 197 490 185Q493 177 500 173 510 168 523 168 548 169 568 177L620 192Q720 217 830 224 925 228 975 214 985 210 997 210 1027 211 1053 222 1073 233 1075 245L1071 270 1068 280Q1062 294 1042 294L1020 294 1000 291 973 294Q1025 316 1067 325L1100 330Q1132 333 1155 347 1170 357 1169 370L1164 393Q1160 406 1143 412 1120 417 1072 402L1072 374 927 368 870 362 820 358Q740 354 677 369 660 375 627 370 598 362 584 347 577 340 578 327L582 310Q585 290 620 288L637 289 670 289 678 288Q635 264 570 255L547 253Q510 247 490 228 483 222 483 213z"/>
              <!-- fillet along the top edge -->
              <path fill="#9a5344" d="M489 185Q493 177 500 173 510 168 523 168 548 169 568 177L620 192Q720 217 830 224 925 228 975 214 985 210 997 210 1027 211 1053 222 1073 233 1075 249 1050 220 993 221L972 222Q925 237 853 236 740 233 567 189 520 175 489 185z"/>
              <path class="shine" d="M500 178Q530 172 567 185 740 230 853 232 925 232 972 219L993 217Q1040 219 1064 236"/>
              <path fill="url(#armMid)" d="M489 185Q520 175 567 189 740 233 853 236 925 237 972 222L993 221Q1050 224 1075 250L1070 271Q1040 239 967 243 930 256 853 258 735 256 565 210 515 194 484 208z"/>
              <path fill="url(#under)" stroke="none" d="M484 208Q515 194 565 210 735 256 853 258 930 256 967 243L967 269Q930 280 830 279 700 271 577 236L557 226Q520 213 497 220L490 228Q483 222 484 208z"/>
              <path fill="none" d="M484 208Q515 194 565 210M557 226L577 236Q700 271 830 279 925 281 967 269M568 177Q570 195 557 226M975 214Q964 240 968 257L973 262"/>
              <path fill="url(#under)" d="M967 243Q1040 239 1070 271L1068 280Q1062 294 1042 294L1000 291Q966 285 966 270z"/>
              <!-- lower left arm -->
              <path fill="url(#under)" d="M678 288Q713 305 713 323 708 345 640 345L587 343 580 340 578 327 582 310Q585 290 620 288L637 289 670 289z"/>
              <path fill="#9a5344" d="M585 304Q588 290 620 288L637 289 670 289 678 288 690 295Q665 302 637 301 605 297 585 304z"/>
              <path class="shine" d="M594 297Q610 293 637 297 660 297 680 293"/>
              <path fill="#744034" d="M585 304Q605 297 637 301 665 302 690 295 702 302 696 309 685 324 650 323L597 321 580 326z"/>
              <path fill="none" d="M627 289Q618 312 618 338"/>
              <!-- lower right arm -->
              <path fill="url(#under)" d="M1000 291Q933 292 929 316 932 351 1030 373L1074 377 1072 402Q1120 417 1143 412 1160 406 1164 393 1125 355 1092 363L973 294z"/>
              <path fill="#9a5344" d="M962 296L973 294Q1025 316 1067 325L1100 330Q1132 333 1155 347 1168 357 1168 368 1140 340 1097 342 1000 330 962 296z"/>
              <path class="shine" d="M975 299Q1030 330 1097 338 1135 338 1157 354"/>
              <path fill="url(#armLow)" d="M948 303L962 296Q1000 330 1097 342 1140 340 1168 368L1164 391Q1140 361 1092 363 985 354 948 303z"/>
              <path fill="none" d="M1100 330Q1090 355 1091 379"/>
              <!-- bores -->
              <g>
                <path fill="#7b4235" d="M490 228Q494 219 510 219 545 218 570 233 586 244 580 250 570 257 547 253 510 247 490 228z"/>
                <path fill="url(#hole)" d="M499 225Q505 218 537 222 568 230 577 241 570 250 530 242 503 235 499 225z"/>
                <path fill="#7b4235" d="M585 350Q585 338 600 338 635 340 662 352 682 364 670 371 650 376 627 370 600 363 585 350z"/>
                <path fill="url(#hole)" d="M593 343Q600 337 620 342 665 350 672 360 670 368 627 361 600 353 593 343z"/>
                <path fill="#7b4235" d="M966 270Q966 259 985 260 1027 261 1050 274 1061 284 1055 290 1045 295 1007 291 970 284 966 270z"/>
                <path fill="url(#hole)" d="M973 267Q975 258 1000 261 1045 270 1051 282 1045 289 1010 286 980 279 973 267z"/>
                <path fill="#7b4235" d="M1070 384Q1095 376 1120 384 1160 397 1150 409 1130 418 1072 402z"/>
                <path fill="url(#hole)" d="M1073 390Q1078 379 1110 384 1142 392 1145 400 1138 411 1097 403L1073 395z"/>
                <path fill="none" d="M549 246v7M563 246l2 8M665 365l3 7M1007 285l-2 6M1023 287v7M1089 401l-2 6"/>
              </g>
              <!-- centre recess and slots -->
              <path fill="#b87b6a" d="M719 309L792 280 861 306 851 355z"/>
              <path fill="#7c4236" d="M861 306L923 327 851 355z"/>
              <path fill="#6d3a2f" d="M616 256L661 259 666 268 623 264zM685 343L729 347 734 355 692 351zM907 281L950 284 957 292 914 289z"/>
              <path fill="none" d="M623 256v8M692 344v7M914 282v7"/>
            </g>
            <!-- leg -->
            <g stroke="#171204" stroke-width="1" stroke-linejoin="round">
              <path fill="#6b5613" fill-rule="evenodd" d="M926 364L1063 374 1075 378 998 638 996 641 908 633 901 627zM971 414L1014 418 997 505 960 466zM954 493L992 530 979 597 936 593z"/>
              <path fill="#7a6318" d="M926 364L932 364 907 626 901 627z"/>
              <path fill="url(#gold)" d="M1063 375Q1070 375 1075 379L998 638 987 632z"/>
              <path fill="none" stroke-dasharray="1 1" d="M1075 379L998 638"/>
              <path fill="none" d="M1072 378L995 635"/>
              <path fill="#574610" d="M901 625L987 632 997 636 996 639Q950 639 908 633 901 631 901 625z"/>
              <path fill="#574610" d="M964 406L1016 411 1014 418 971 414z"/>
              <path fill="#866c14" d="M964 406L971 414 960 466 953 460zM948 484L954 493 936 593 927 592z"/>
              <path fill="none" d="M1016 411L997 505 953 460M948 484L992 530"/>
            </g>
            <!-- triad -->
            <g class="triad">
              <path stroke="#1d7a1d" stroke-width="3" d="M387 597l3-20"/><path fill="#135c13" d="M385 579l5-11 4 12z"/>
              <path stroke="#c81e14" stroke-width="3" d="M386 597l-18-2"/><path fill="#b01810" d="M370 590l-12 4 11 6z"/>
              <path stroke="#1c2bd0" stroke-width="3" d="M386 597l4 4"/><circle cx="391" cy="604" r="4" fill="#1018b8"/>
              <text x="351" y="598" fill="#d0201a">X</text><text x="388" y="567" fill="#1d7a1d">Y</text><text x="391" y="612" fill="#1c2bd0">Z</text>
            </g>
          </svg>

          <div class="headsup">
            <button class="tool" aria-label="Zoom to Fit"><svg><use href="#zoomfit"/></svg></button>
            <button class="tool" aria-label="Zoom to Area"><svg><use href="#zoomarea"/></svg></button>
            <button class="tool" aria-label="Previous View"><svg><use href="#prevview"/></svg></button>
            <button class="tool" aria-label="Section View"><svg><use href="#section"/></svg></button>
            <button class="tool" aria-label="View Orientation"><svg><use href="#orient"/></svg></button><button class="drop" aria-label="Orientation options"></button>
            <button class="tool" aria-label="Display Style"><svg><use href="#display"/></svg></button><button class="drop" aria-label="Style options"></button>
            <button class="tool" aria-label="Hide/Show Items"><svg><use href="#eye"/></svg></button><button class="drop" aria-label="Hide options"></button>
            <button class="tool" aria-label="Edit Appearance"><svg><use href="#editapp"/></svg></button>
            <button class="tool" aria-label="Apply Scene"><svg><use href="#scene"/></svg></button><button class="drop" aria-label="Scene options"></button>
            <button class="tool" aria-label="View Settings"><svg><use href="#monitor"/></svg></button><button class="drop" aria-label="View options"></button>
          </div>
          <div class="splitter"><i></i></div>
        </div>
      </div>

      <div class="sheets">
        <div class="nav"><button aria-label="First tab"><svg viewBox="0 0 10 10"><path d="M2 1v8M8 1L4 5l4 4"/></svg></button><button aria-label="Previous tab"><svg viewBox="0 0 10 10"><path d="M7 1L3 5l4 4z"/></svg></button><button aria-label="Next tab"><svg viewBox="0 0 10 10"><path d="M3 1l4 4-4 4z"/></svg></button><button aria-label="Last tab"><svg viewBox="0 0 10 10"><path d="M8 1v8M2 1l4 4-4 4"/></svg></button></div>
        <button class="sheet active">Model</button>
        <button class="sheet">Motion Study 1</button>
      </div>

      <div class="taskpane">
        <button aria-label="Resources"><svg><use href="#home"/></svg></button>
        <button aria-label="Design Library"><svg><use href="#books"/></svg></button>
        <button aria-label="File Explorer"><svg><use href="#folder"/></svg></button>
        <button aria-label="View Palette"><svg><use href="#palette"/></svg></button>
        <button class="active" aria-label="Appearances"><svg><use href="#ball"/></svg></button>
        <button aria-label="Custom Properties"><svg><use href="#listmgr"/></svg></button>
        <button aria-label="Forum"><svg><use href="#forum"/></svg></button>
      </div>
    </section>

    <!-- Sketch toolbar -->
    <div class="bar sketchbar">
      <div class="grip"></div>
      <div class="row"><button class="tool" aria-label="Sketch"><svg><use href="#sketch"/></svg></button><button class="drop" aria-label="Sketch options"></button></div>
      <div class="row"><button class="tool" aria-label="Smart Dimension"><svg><use href="#dim"/></svg></button><button class="drop" aria-label="Dimension options"></button></div>
      <hr>
      <div class="row"><button class="tool" aria-label="Line"><svg><use href="#line"/></svg></button><button class="drop" aria-label="Line options"></button></div>
      <div class="row"><button class="tool" aria-label="Rectangle"><svg><use href="#rect"/></svg></button><button class="drop" aria-label="Rectangle options"></button></div>
      <div class="row"><button class="tool" aria-label="Slot"><svg><use href="#slot"/></svg></button><button class="drop" aria-label="Slot options"></button></div>
      <div class="row"><button class="tool" aria-label="Circle"><svg><use href="#circle"/></svg></button><button class="drop" aria-label="Circle options"></button></div>
      <div class="row"><button class="tool" aria-label="Arc"><svg><use href="#arc"/></svg></button><button class="drop" aria-label="Arc options"></button></div>
      <div class="row"><button class="tool" aria-label="Spline"><svg><use href="#spline"/></svg></button><button class="drop" aria-label="Spline options"></button></div>
      <div class="row"><button class="tool" aria-label="Ellipse"><svg><use href="#ellipse"/></svg></button><button class="drop" aria-label="Ellipse options"></button></div>
      <div class="row off"><button class="tool" aria-label="Sketch Fillet"><svg><use href="#skfillet"/></svg></button><button class="drop" aria-label="Fillet options"></button></div>
      <div class="row"><button class="tool" aria-label="Polygon"><svg><use href="#polygon"/></svg></button></div>
      <div class="row"><button class="tool" aria-label="Point"><svg><use href="#point"/></svg></button></div>
      <div class="row"><button class="tool" aria-label="Plane"><svg><use href="#plane"/></svg></button></div>
      <div class="row"><button class="tool" aria-label="Text"><svg><use href="#text"/></svg></button></div>
      <hr>
      <div class="row off"><button class="tool" aria-label="Trim Entities"><svg><use href="#trim"/></svg></button><button class="drop" aria-label="Trim options"></button></div>
      <div class="row"><button class="tool" aria-label="Convert Entities"><svg><use href="#convert"/></svg></button><button class="drop" aria-label="Convert options"></button></div>
      <div class="row off"><button class="tool" aria-label="Offset Entities"><svg><use href="#offset"/></svg></button></div>
      <div class="row off"><button class="tool" aria-label="Mirror Entities"><svg><use href="#mirror"/></svg></button></div>
      <div class="row off"><button class="tool" aria-label="Sketch Pattern"><svg><use href="#lpattern"/></svg></button><button class="drop" aria-label="Pattern options"></button></div>
      <div class="row off"><button class="tool" aria-label="Move Entities"><svg><use href="#moveent"/></svg></button><button class="drop" aria-label="Move options"></button></div>
      <hr>
      <div class="row off"><button class="tool" aria-label="Display Relations"><svg><use href="#relations"/></svg></button><button class="drop" aria-label="Relation options"></button></div>
      <div class="row off"><button class="tool" aria-label="Repair Sketch"><svg><use href="#repair"/></svg></button></div>
      <hr>
      <button class="more" aria-label="More tools"><svg><use href="#more"/></svg></button>
    </div>
  </main>

  <!-- Selection filter toolbar -->
  <div class="filters">
    <div class="vgrip"></div>
    <button class="f off" aria-label="Toggle Filters"><svg><use href="#funnel1"/></svg></button>
    <button class="f off" aria-label="Clear Filters"><svg><use href="#funnels"/></svg></button>
    <button class="f" aria-label="Select All Filters"><svg><use href="#funnelsb"/></svg></button>
    <button class="f on" aria-label="Select"><svg><use href="#cursor"/></svg></button><button class="drop boxed" aria-label="Select options"></button>
    <button class="f off" aria-label="Inverse Selection"><svg><use href="#cursors"/></svg></button>
    <div class="vsep"></div>
    <button class="f" aria-label="Filter Vertices"><svg><use href="#f1"/><use href="#fn"/></svg></button>
    <button class="f" aria-label="Filter Edges"><svg><use href="#f2"/><use href="#fn"/></svg></button>
    <button class="f" aria-label="Filter Faces"><svg><use href="#f3"/><use href="#fn"/></svg></button>
    <button class="f" aria-label="Filter Surfaces"><svg><use href="#f4"/><use href="#fn"/></svg></button>
    <button class="f" aria-label="Filter Solids"><svg><use href="#f5"/><use href="#fn"/></svg></button>
    <button class="f" aria-label="Filter Axes"><svg><use href="#f6"/><use href="#fn"/></svg></button>
    <button class="f" aria-label="Filter Planes"><svg><use href="#f7"/><use href="#fn"/></svg></button>
    <button class="f" aria-label="Filter Sketch Points"><svg><use href="#f8"/><use href="#fn"/></svg></button>
    <button class="f" aria-label="Filter Sketches"><svg><use href="#f9"/><use href="#fn"/></svg></button>
    <button class="f" aria-label="Filter Segments"><svg><use href="#f10"/><use href="#fn"/></svg></button>
    <button class="f" aria-label="Filter Midpoints"><svg><use href="#f11"/><use href="#fn"/></svg></button>
    <button class="f" aria-label="Filter Center Marks"><svg><use href="#f12"/><use href="#fn"/></svg></button>
    <button class="f" aria-label="Filter Centerline"><svg><use href="#f13"/><use href="#fn"/></svg></button>
    <button class="f" aria-label="Filter Dimensions"><svg><use href="#f14"/><use href="#fn"/></svg></button>
    <button class="f" aria-label="Filter Surface Finish"><svg><use href="#f15"/><use href="#fn"/></svg></button>
    <button class="f" aria-label="Filter Tolerances"><svg><use href="#f16"/><use href="#fn"/></svg></button>
    <button class="f" aria-label="Filter Notes"><svg><use href="#f17"/><use href="#fn"/></svg></button>
    <button class="f" aria-label="Filter Datums"><svg><use href="#f18"/><use href="#fn"/></svg></button>
    <button class="f" aria-label="Filter Welds"><svg><use href="#f19"/><use href="#fn"/></svg></button>
    <button class="f" aria-label="Filter Weld Beads"><svg><use href="#f20"/><use href="#fn"/></svg></button>
    <button class="f" aria-label="Filter Datum Targets"><svg><use href="#f21"/><use href="#fn"/></svg></button>
    <button class="f" aria-label="Filter Threads"><svg><use href="#f22"/><use href="#fn"/></svg></button>
    <button class="f" aria-label="Filter Blocks"><svg><use href="#f23"/><use href="#fn"/></svg></button>
    <button class="f" aria-label="Filter Center of Mass"><svg><use href="#f24"/><use href="#fn"/></svg></button>
    <button class="f" aria-label="Filter Connection Points"><svg><use href="#f25"/><use href="#fn"/></svg></button>
    <button class="f" aria-label="Filter Routing Points"><svg><use href="#f26"/><use href="#fn"/></svg></button>
    <div class="vsep end"></div>
  </div>

  <footer class="status">
    <span class="edition">SOLIDWORKS Student Edition - Academic Use Only</span>
    <span class="cell">Under Defined</span>
    <span class="cell">Editing Assembly</span>
    <span class="cell spare"></span>
    <button class="units">MMGS<i></i></button>
    <button class="tag" aria-label="Tags"><svg><use href="#tag"/></svg></button>
  </footer>
  <div class="desktop"><i></i><i></i><i></i><i></i><i></i><i></i><i></i><i></i><i></i></div>
</body>
</html>
```
FILE: styles.css
```css
/* Reset & fonts */
*, *::before, *::after { margin:0; padding:0; box-sizing:border-box; }
body {
  font-family:'Open Sans', 'Noto Sans', sans-serif; font-size:11px; line-height:16px;
  background:#f7f7f7; color:#111; height:100vh; min-height:734px; display:flex; flex-direction:column; overflow:hidden;
}
button, input { font:inherit; color:inherit; background:none; border:none; }
button { display:flex; align-items:center; justify-content:center; flex:none; }
svg { width:20px; height:20px; flex:none; display:block; }
.sprite { position:absolute; width:0; height:0; }

/* Icon strokes */
.k { fill:none; stroke:#444; }
.g { fill:url(#gGrey); stroke:#555; }
.b { fill:url(#gBlue); stroke:#1c4c66; }
.s { fill:none; stroke:#276e96; }
.d { fill:#fff; stroke:#222; }
.lens { fill:#dde5ea; stroke:#555; }

/* Shared tool buttons */
.tool { width:26px; height:26px; }
.tool.on, .f.on { background:#cfcfcf; border:1px solid #3c87b0; }
.drop { width:13px; height:26px; }
.drop::after { content:''; border:3px solid transparent; border-top-color:#333; border-bottom:0; }
.drop.boxed { border:1px solid #8a8a8a; border-left:0; }
.off { opacity:.35; filter:grayscale(1); }

/* Menu bar */
.menubar { display:flex; align-items:center; height:35px; border-bottom:2px solid #4a4a4a; }
.logo {
  width:142px; height:31px; margin-left:12px; padding-left:3px; display:flex; align-items:center; gap:3px; color:#d9261c;
  background:linear-gradient(160deg, #fff 55%, #d4d4d4); border:1px solid #aaa; border-width:0 1px 0 1px; font-size:16px;
}
.logo svg { width:30px; height:28px; }
.logo span { font-family:'Lato', sans-serif; font-style:italic; padding-top:3px; }
.logo b { font-weight:900; }
.menus { display:flex; align-items:center; gap:17px; height:33px; width:361px; padding-left:29px; border-right:2px solid #999; }
.pin { margin-left:8px; }
.pin svg { width:14px; height:14px; }
.std { display:flex; align-items:center; margin-left:12px; }
.doc-name { margin:0 auto; }
.search { display:flex; align-items:center; width:202px; height:23px; border:1px solid #b5b5b5; padding:0 3px; gap:2px; }
.search input { flex:1; min-width:0; background:#eceef4; height:19px; padding-left:2px; }
.search input::placeholder { color:#555; opacity:1; }
.search .drop { width:10px; }
.app-btns { display:flex; align-items:center; gap:2px; margin:0 2px 0 6px; }
.app-btns button { width:23px; }
.app-btns .drop { width:13px; }
.app-btns svg { width:18px; height:18px; }
.help { font-size:18px; font-weight:700; color:#666; }

/* Workspace */
.workspace { flex:1; display:grid; grid-template-columns:48px 48px 1fr 48px; min-height:0; }
.bar { align-self:start; padding:2px 0 6px; }
.grip { height:3px; margin:0 2px 8px 3px; background:repeating-linear-gradient(90deg, #999 0 2px, transparent 2px 4px); }
.features { border-bottom:1px solid #888; }
.assembly { border:1px solid #888; border-width:0 0 1px 1px; margin-right:1px; }
.sketchbar { border-bottom:1px solid #888; padding-left:2px; }
.row { display:flex; padding-left:3px; height:26px; }
.row .drop { width:16px; }
.bar hr { height:1px; border:none; background:#888; margin:3px 3px 4px 5px; }
.more { width:46px; height:17px; }

/* Document window */
.window {
  position:relative; display:flex; flex-direction:column; min-width:0; margin-bottom:2px; padding:0 7px 7px 6px;
  background:#b9d1ea; border:1px solid #000; border-radius:6px 6px 0 0;
  box-shadow:inset -1px -1px 0 #2bc4e0, inset 1px 1px 0 #e8f2fb;
}
.titlebar {
  display:flex; align-items:center; height:28px; margin:0 -6px; padding:5px 9px 0 9px; gap:3px;
  background:linear-gradient(#99b4d1, #b9d1ea); border-radius:6px 6px 0 0;
}
.titlebar > svg { width:17px; height:17px; }
.titlebar h1 { font-size:11px; font-weight:400; flex:1; }
.win-btns { display:flex; gap:3px; }
.win-btns button { width:31px; height:17px; border:1px solid #586f8d; border-radius:2px; background:linear-gradient(#dbe8f5 45%, #a7c0dc 50%); }
.win-btns svg { width:13px; height:13px; }
.win-btns .joined { margin-right:-4px; }
.win-btns .close { border-color:#5a2322; background:linear-gradient(#e4a493 45%, #c2402b 50%); }
.client { display:flex; flex:1; min-height:0; margin-left:1px; }

/* FeatureManager */
.manager { width:242px; flex:none; display:flex; flex-direction:column; background:#f7f7f7; border-right:1px solid #777; padding-right:2px; }
.flyout { height:16px; margin:3px 0 4px; border:1px solid #bbb; border-width:1px 0; display:flex; align-items:center; justify-content:center; }
.flyout i, .splitter i { width:6px; height:6px; border:1px solid #888; border-radius:50%; background:#ccc; }
.mgr-tabs { display:flex; height:26px; }
.mgr-tabs button { width:40px; border:1px solid #888; border-left:0; background:#d3d3d3; }
.mgr-tabs .active { background:#f7f7f7; border-bottom:0; }
.mgr-tabs .next { flex:1; border:none; border-bottom:1px solid #aaa; background:none; padding-left:22px; }
.mgr-tabs .next svg { width:16px; height:16px; }
.tree-filter { display:flex; align-items:center; height:25px; margin:1px 1px 0 3px; border:1px solid #bbb; padding-left:1px; }
.tree-filter .drop { width:8px; }
.tree { list-style:none; overflow:hidden; border-bottom:2px solid #1a5fae; }
.tree li { display:flex; align-items:center; height:22px; gap:5px; padding-left:25px; white-space:nowrap; position:relative; }
.tree svg { width:18px; height:18px; }
.tree .edu { width:20px; margin-right:-1px; }
.tree .root { padding-left:3px; gap:4px; }
.tree .exp::before { content:''; position:absolute; left:8px; border:4px solid transparent; border-left:5px solid #666; border-right:0; }
.hscroll { display:flex; height:15px; margin-top:auto; margin-bottom:2px; background:#f0f0f0; }
.hscroll button { width:14px; }
.hscroll button::after { content:''; border:4px solid transparent; border-right-color:#333; border-left:0; }
.hscroll .right::after { border:4px solid transparent; border-left-color:#333; border-right:0; }
.track { flex:1; padding-left:3px; }
.thumb {
  width:153px; height:15px; border:1px solid #999; border-radius:2px;
  background:repeating-linear-gradient(90deg, #666 0 1px, transparent 1px 3px) center / 8px 7px no-repeat, linear-gradient(#f5f5f5 50%, #d8d8d8 50%);
}

/* Graphics area */
.viewport { position:relative; flex:1; min-width:0; background:#c5c9d4; }
.model { position:absolute; left:0; top:0; width:100%; height:100%; }
.shine { fill:none; stroke:#b97463; stroke-width:3; opacity:.4; }
.triad text { font-family:'Liberation Sans', sans-serif; font-size:10px; }
.headsup { position:relative; display:flex; justify-content:center; padding:3px 6px 0 0; opacity:.85; }
.headsup .drop { width:14px; }
.headsup .drop::after { border-top-color:#777; }
.splitter {
  position:absolute; left:-1px; top:276px; width:9px; height:39px; background:#f7f7f7; border:1px solid #888; border-left:0;
  display:flex; align-items:center; justify-content:center;
}

/* Sheet tabs */
.sheets { display:flex; height:16px; margin-left:1px; background:#f7f7f7; border-top:1px solid #888; }
.nav { display:flex; background:#a0a0a0; width:67px; }
.nav button { flex:1; border:1px solid #8a8a8a; }
.nav svg { width:9px; height:9px; fill:none; stroke:#777; }
.sheet { min-width:109px; padding:0 9px 2px; justify-content:flex-start; background:#d3d3d3; border:1px solid #888; border-width:0 1px; }
.sheet.active { min-width:0; background:none; font-weight:700; border:none; padding:0 10px 2px 12px; }

/* Task pane tabs */
.taskpane { position:absolute; right:-1px; top:57px; border:1px solid #888; border-right:0; }
.taskpane button { width:25px; height:24px; padding-right:1px; background:#d3d3d3; border-bottom:1px solid #888; }
.taskpane button:last-child { border-bottom:0; }
.taskpane .active { background:#f7f7f7; }

/* Selection filters */
.filters { display:flex; align-items:center; height:32px; padding-top:1px; border-bottom:1px solid #999; margin-top:-1px; }
.vgrip { width:3px; height:24px; margin:0 7px 0 4px; background:repeating-linear-gradient(#999 0 2px, transparent 2px 4px); }
.f { width:27px; height:26px; }
.vsep { width:1px; height:26px; background:#999; margin:0 3px 0 4px; }
.vsep.end { height:30px; margin:0 0 0 8px; }

/* Status bar */
.status { display:flex; align-items:center; height:20px; padding-left:1px; }
.edition { flex:1; }
.cell { height:16px; padding:0 10px 0 4px; border-right:1px solid #ccc; }
.cell.spare { width:15px; padding:0; }
.units { width:154px; gap:22px; padding-left:31px; justify-content:flex-start; }
.units i { border:3px solid transparent; border-bottom-color:#333; border-top:0; }
.tag { width:24px; }
.tag svg { width:18px; height:18px; }
.desktop { display:flex; gap:2px; height:3px; padding-left:121px; background:#a9c6e3; border-top:1px solid #4c6a8a; }
.desktop i { width:60px; background:#dfeaf5; border-radius:2px 2px 0 0; }
```
